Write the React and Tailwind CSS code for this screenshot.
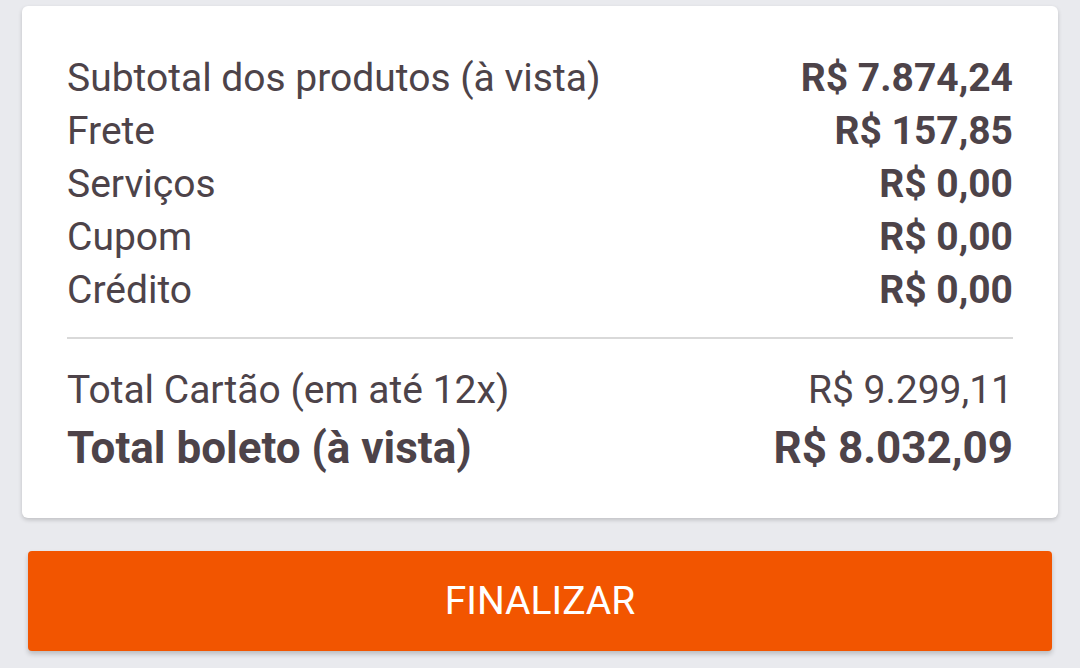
import React from "react";

const rows = [
  { label: "Subtotal dos produtos (à vista)", value: "R$ 7.874,24" },
  { label: "Frete", value: "R$ 157,85" },
  { label: "Serviços", value: "R$ 0,00" },
  { label: "Cupom", value: "R$ 0,00" },
  { label: "Crédito", value: "R$ 0,00" },
];

export default function App() {
  return (
    <div
      className="min-h-screen bg-[#e9eaee] pt-[6px] text-[#4d4349]"
      style={{ fontFamily: "Roboto, 'Liberation Sans', sans-serif" }}
    >
      {/* Resumo */}
      <div className="mx-[22px] rounded-md bg-white px-[45px] pt-[46px] pb-[39px] shadow-[0_2px_4px_rgba(0,0,0,0.18)]">
        <div className="flex flex-col">
          {rows.map((row) => (
            <div key={row.label} className="flex items-center justify-between text-[39px] leading-[53px]">
              <span>{row.label}</span>
              <span className="font-bold">{row.value}</span>
            </div>
          ))}
        </div>

        <div className="mt-[20px] h-[2px] bg-[#d9d9d9]" />

        <div className="mt-[25px] flex items-center justify-between text-[39px] leading-[53px]">
          <span>Total Cartão (em até 12x)</span>
          <span>R$ 9.299,11</span>
        </div>
        <div className="flex items-center justify-between text-[44px] font-bold leading-[62px]">
          <span>Total boleto (à vista)</span>
          <span>R$ 8.032,09</span>
        </div>
      </div>

      <div className="mx-[28px] mt-[33px]">
        <button className="flex h-[100px] w-full items-center justify-center rounded bg-[#f25500] text-[39px] text-white shadow-[0_3px_5px_rgba(0,0,0,0.2)]">
          FINALIZAR
        </button>
      </div>
    </div>
  );
}
